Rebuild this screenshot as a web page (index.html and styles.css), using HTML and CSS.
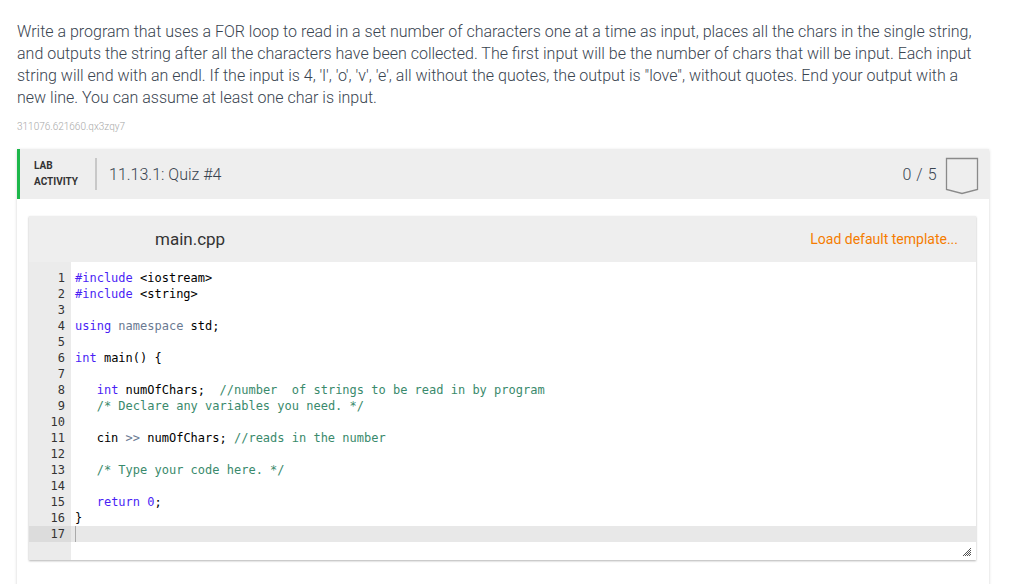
FILE: index.html
```html
<!DOCTYPE html>
<html>
<head>
<meta charset="utf-8">
<link rel="stylesheet" href="styles.css">
</head>
<body>
<div class="page">
  <p class="prompt">Write a program that uses a FOR loop to read in a set number of characters one at a time as input, places all the chars in the single string, and outputs the string after all the characters have been collected. The first input will be the number of chars that will be input. Each input string will end with an endl. If the input is 4, 'l', 'o', 'v', 'e', all without the quotes, the output is "love", without quotes. End your output with a new line. You can assume at least one char is input.</p>
  <div class="qid">311076.621660.qx3zqy7</div>

  <div class="lab">
    <div class="lab-head">
      <div class="lab-label">LAB<br>ACTIVITY</div>
      <div class="lab-sep"></div>
      <div class="lab-title">11.13.1: Quiz #4</div>
      <div class="lab-score">0 / 5</div>
      <svg class="lab-badge" width="34" height="38" viewBox="0 0 34 38">
        <path d="M1.5 1.5 H32.5 V32.5 L17 36.5 L1.5 32.5 Z" fill="none" stroke="#8a8a8a" stroke-width="1.3"/>
      </svg>
    </div>
    <div class="lab-body">
      <div class="editor">
        <div class="editor-head">
          <span class="filename">main.cpp</span>
          <span class="load">Load default template...</span>
        </div>
        <div class="code">
          <div class="line"><span class="ln">1</span><span class="src"><span class="kw">#include</span> &lt;iostream&gt;</span></div>
          <div class="line"><span class="ln">2</span><span class="src"><span class="kw">#include</span> &lt;string&gt;</span></div>
          <div class="line"><span class="ln">3</span><span class="src"></span></div>
          <div class="line"><span class="ln">4</span><span class="src"><span class="kw">using</span> <span class="ns">namespace</span> std;</span></div>
          <div class="line"><span class="ln">5</span><span class="src"></span></div>
          <div class="line"><span class="ln">6</span><span class="src"><span class="kw">int</span> main() {</span></div>
          <div class="line"><span class="ln">7</span><span class="src"></span></div>
          <div class="line"><span class="ln">8</span><span class="src">   <span class="kw">int</span> numOfChars;  <span class="cm">//number  of strings to be read in by program</span></span></div>
          <div class="line"><span class="ln">9</span><span class="src">   <span class="cm">/* Declare any variables you need. */</span></span></div>
          <div class="line"><span class="ln">10</span><span class="src"></span></div>
          <div class="line"><span class="ln">11</span><span class="src">   cin <span class="ns">&gt;&gt;</span> numOfChars; <span class="cm">//reads in the number</span></span></div>
          <div class="line"><span class="ln">12</span><span class="src"></span></div>
          <div class="line"><span class="ln">13</span><span class="src">   <span class="cm">/* Type your code here. */</span></span></div>
          <div class="line"><span class="ln">14</span><span class="src"></span></div>
          <div class="line"><span class="ln">15</span><span class="src">   <span class="kw">return</span> <span class="kw">0</span>;</span></div>
          <div class="line"><span class="ln">16</span><span class="src">}</span></div>
          <div class="line active"><span class="ln">17</span><span class="src"><span class="cursor"></span></span></div>
          <div class="line tail"><span class="ln"></span><span class="src"></span>
            <svg class="grip" width="8" height="8" viewBox="0 0 8 8">
              <path d="M6 1 h1 v1 h-1z M4 3 h1 v1 h-1z M6 3 h1 v1 h-1z M2 5 h1 v1 h-1z M4 5 h1 v1 h-1z M6 5 h1 v1 h-1z M0 7 h1 v1 h-1z M2 7 h1 v1 h-1z M4 7 h1 v1 h-1z M6 7 h1 v1 h-1z M7 0 h1 v1 h-1z M5 2 h1 v1 h-1z M7 2 h1 v1 h-1z M3 4 h1 v1 h-1z M5 4 h1 v1 h-1z M7 4 h1 v1 h-1z M1 6 h1 v1 h-1z M3 6 h1 v1 h-1z M5 6 h1 v1 h-1z M7 6 h1 v1 h-1z" fill="#555"/>
            </svg>
          </div>
        </div>
      </div>
    </div>
  </div>
</div>
</body>
</html>
```

FILE: styles.css
```css
html, body {
  margin: 0;
  padding: 0;
  background: #fff;
}

.page {
  padding: 21px 27px 0 17px;
  font-family: Roboto, "Liberation Sans", sans-serif;
  color: #394450;
}

.prompt {
  margin: 0;
  font-size: 16px;
  font-weight: 300;
  line-height: 22px;
}

.qid {
  margin-top: 12px;
  font-size: 10px;
  line-height: 12px;
  color: #a8a8a8;
  font-weight: 300;
}

.lab {
  margin-top: 16px;
  box-shadow: 0 1px 3px rgba(0, 0, 0, 0.18);
  height: 460px;
}

.lab-head {
  height: 50px;
  background: #eeeeee;
  border-left: 3px solid #1db74b;
  display: flex;
  align-items: center;
  padding: 0 10px 0 14px;
}

.lab-label {
  font-size: 10px;
  font-weight: 700;
  line-height: 16px;
  color: #333;
  width: 52px;
}

.lab-sep {
  width: 2px;
  height: 32px;
  background: #c8c8c8;
  margin: 0 12px 0 9px;
}

.lab-title {
  font-size: 16px;
  font-weight: 300;
  color: #394450;
  flex: 1;
}

.lab-score {
  font-size: 16px;
  font-weight: 300;
  color: #394450;
  margin-right: 8px;
  letter-spacing: 0.5px;
}

.lab-badge {
  display: block;
  margin-top: 4px;
}

.lab-body {
  padding: 17px 13px 0 12px;
}

.editor {
  background: #fff;
  box-shadow: 0 1px 2px rgba(0, 0, 0, 0.3);
}

.editor-head {
  height: 46px;
  background: #eeeeee;
  display: flex;
  align-items: center;
  justify-content: space-between;
  padding: 0 18px 0 126px;
}

.filename {
  font-size: 17px;
  color: #333;
}

.load {
  font-size: 14px;
  color: #f57c00;
}

.code {
  font-family: "DejaVu Sans Mono", "Liberation Mono", monospace;
  font-size: 12px;
  line-height: 16px;
  color: #000;
  background: linear-gradient(to right, #ebebeb 0 42px, #fff 42px);
  padding-top: 8px;
}

.line {
  display: flex;
  height: 16px;
  white-space: pre;
  position: relative;
}

.ln {
  width: 36px;
  padding-right: 6px;
  text-align: right;
  color: #333;
  flex: none;
}

.src {
  padding-left: 4px;
  flex: 1;
}

.active {
  background: #e8e8e8;
}

.active .ln {
  background: #dcdcdc;
}

.cursor {
  display: inline-block;
  width: 1px;
  height: 16px;
  background: #aaa;
  vertical-align: top;
}

.tail {
  height: 18px;
}

.grip {
  position: absolute;
  right: 5px;
  bottom: 4px;
}

.kw {
  color: #4a1ff5;
}

.ns {
  color: #6a7a92;
}

.cm {
  color: #3a8a6c;
}
```
